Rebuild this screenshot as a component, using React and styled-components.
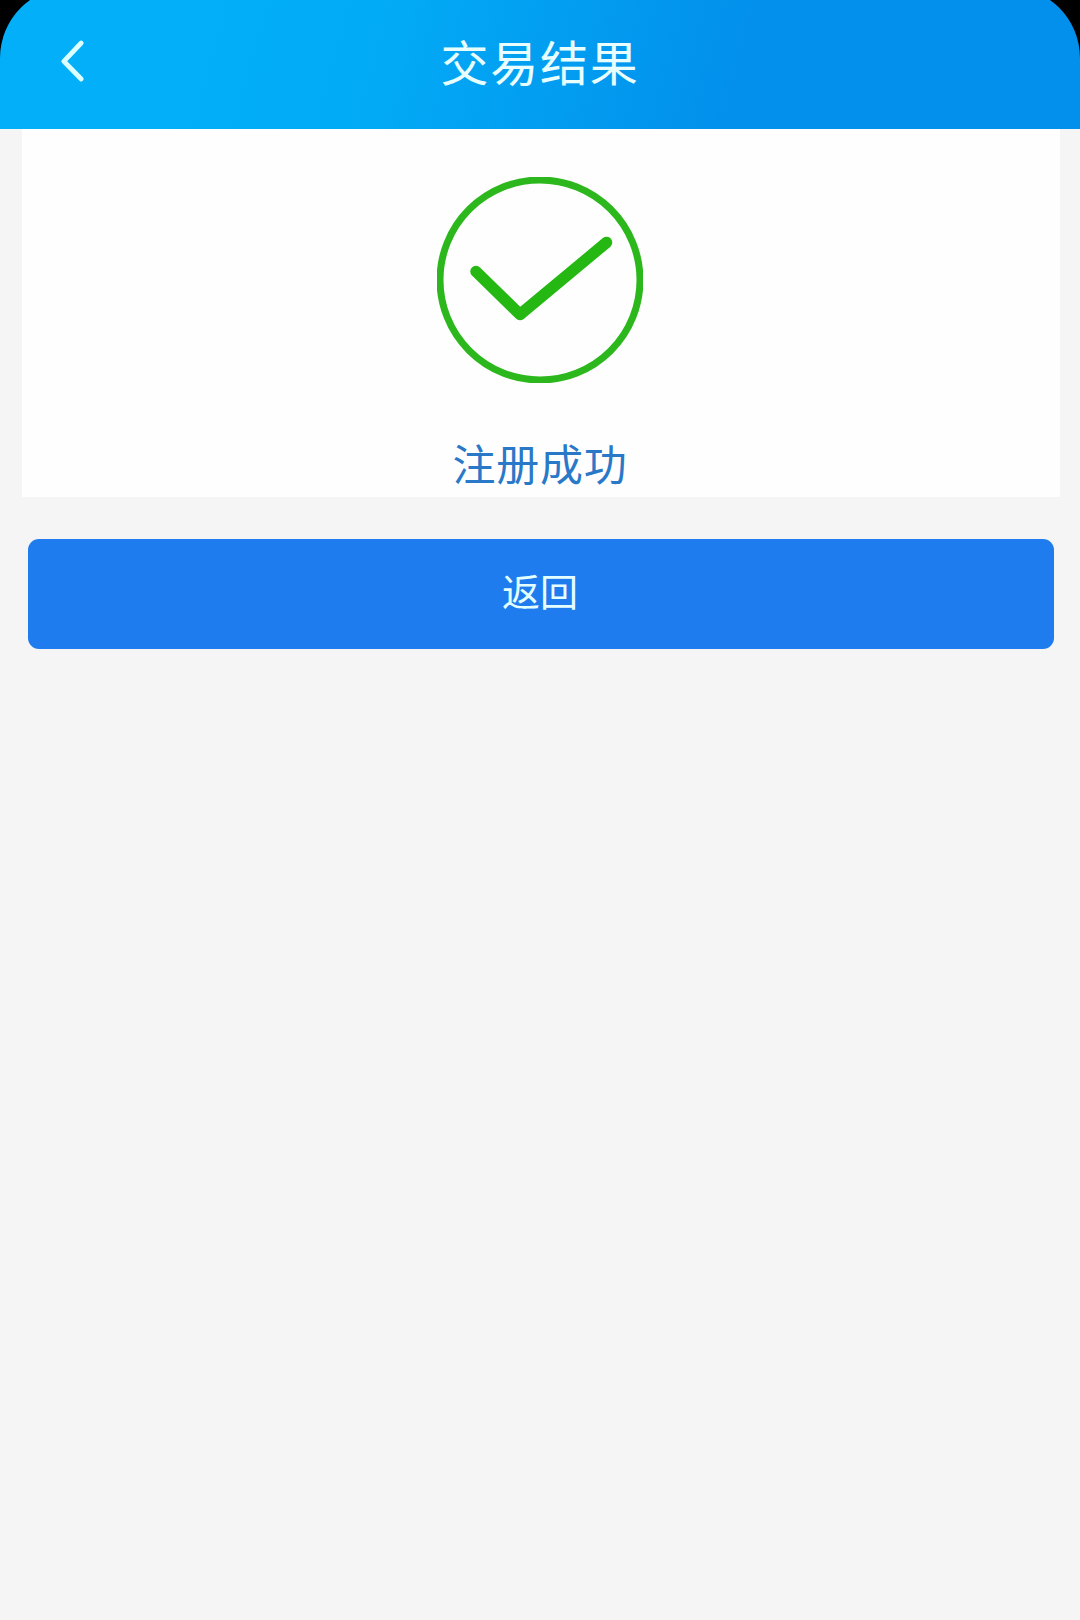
import styled, { createGlobalStyle } from "styled-components";

const GlobalStyle = createGlobalStyle`
  * {
    box-sizing: border-box;
  }

  body {
    margin: 0;
    background: #f5f5f6;
    font-family: "Noto Sans CJK SC", "Noto Sans", sans-serif;
  }
`;

const Page = styled.div`
  display: flex;
  flex-direction: column;
  width: 1080px;
  height: 1620px;
  overflow: hidden;
  background: #f5f5f6;
`;

const TopBar = styled.div`
  flex: none;
  height: 129px;
  overflow: hidden;
  background: #000;
`;

/* starts above the screen so that the rounded corners are cut by its edge */
const Header = styled.header`
  display: grid;
  grid-template-columns: 120px 1fr 120px;
  align-items: center;
  height: 142px;
  margin-top: -13px;
  padding-top: 13px;
  border-radius: 71px 71px 0 0;
  background: linear-gradient(105deg, #02aff8 18%, #02aaf5 36%, #0290ec 68%);
`;

const BackButton = styled.button`
  display: flex;
  padding: 0 0 7px 54px;
  border: none;
  background: none;
  cursor: pointer;
`;

const Title = styled.h1`
  margin: 0;
  padding: 0 0 10px;
  color: #e9ffff;
  font-size: 48px;
  font-weight: 400;
  line-height: 60px;
  letter-spacing: 1.8px;
  text-align: center;
`;

const ResultCard = styled.section`
  display: flex;
  flex-direction: column;
  align-items: center;
  height: 368px;
  margin: 0 20px 0 22px;
  padding: 48px 2px 0 0;
  background: #fefefe;
`;

const ResultText = styled.p`
  margin: 49px 0 0;
  color: #2a78c8;
  font-size: 43px;
  line-height: 60px;
  letter-spacing: 0.8px;
`;

const ReturnButton = styled.button`
  height: 110px;
  margin: 42px 26px 0 28px;
  padding: 0 2px 10px 0;
  border: none;
  border-radius: 11px;
  background: #1e7cee;
  color: #e4ffff;
  font-family: inherit;
  font-size: 38px;
  cursor: pointer;
`;

const BackIcon = () => (
  <svg width="36" height="44" viewBox="0 0 36 44" fill="none">
    <path
      d="M27.2 4 L9.8 22.3 L27.2 40"
      stroke="#dcffff"
      strokeWidth="4.8"
      strokeLinecap="round"
      strokeLinejoin="round"
    />
  </svg>
);

const SuccessIcon = () => (
  <svg width="206" height="206" viewBox="0 0 206 206" fill="none">
    <circle cx="103" cy="103" r="100" stroke="#2cb81d" strokeWidth="7" />
    <path
      d="M39 94.5 L83 137.5 L169.5 65.5"
      stroke="#25b812"
      strokeWidth="11.5"
      strokeLinecap="round"
      strokeLinejoin="round"
    />
  </svg>
);

const App = () => {
  return (
    <>
      <GlobalStyle />
      <Page>
        <TopBar>
          <Header>
            <BackButton aria-label="返回">
              <BackIcon />
            </BackButton>
            <Title>交易结果</Title>
          </Header>
        </TopBar>
        <ResultCard>
          <SuccessIcon />
          <ResultText>注册成功</ResultText>
        </ResultCard>
        <ReturnButton>返回</ReturnButton>
      </Page>
    </>
  );
};

export default App;
